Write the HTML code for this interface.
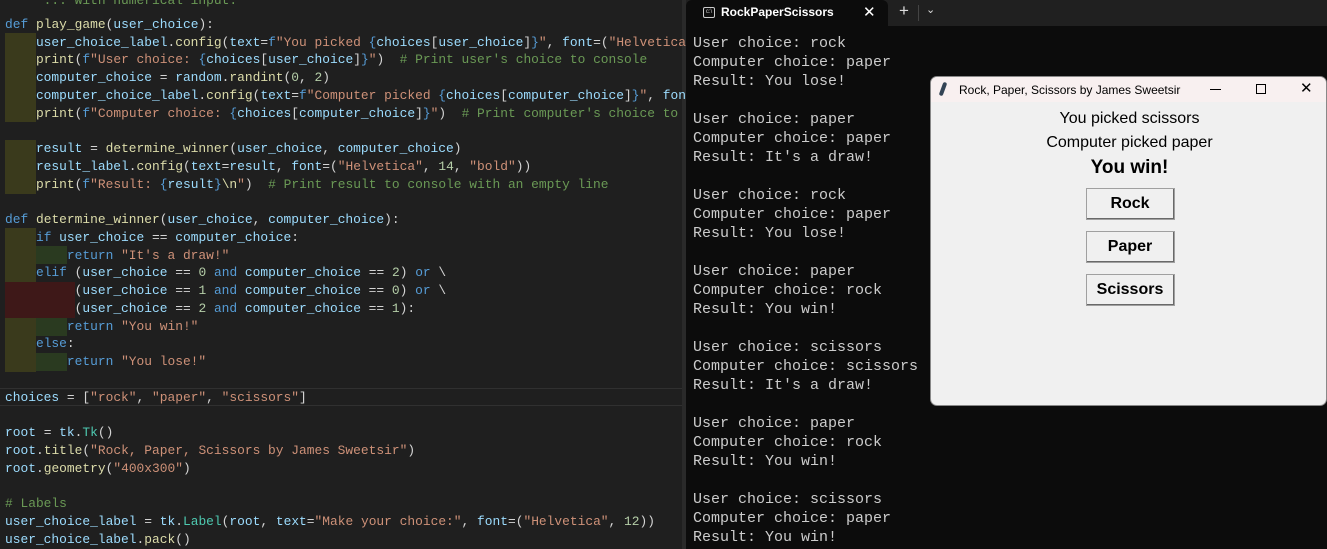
<!DOCTYPE html>
<html><head><meta charset="utf-8"><style>
*{margin:0;padding:0;box-sizing:border-box}
body{width:1327px;height:549px;overflow:hidden;background:#0c0c0c;position:relative;font-family:"Liberation Sans",sans-serif}
#ed{position:absolute;left:0;top:0;width:686px;height:549px;background:#1f1f1f;overflow:hidden}
#code{position:absolute;left:5px;top:-2px;font-family:"Liberation Mono",monospace;font-size:12.9px;line-height:17.75px;color:#9cdcfe;white-space:pre}
.k{color:#569cd6}.f{color:#dcdcaa}.s{color:#ce9178}.c{color:#6a9955}.n{color:#b5cea8}.t{color:#4ec9b0}.w{color:#d4d4d4}
.blk{position:absolute}
#term{position:absolute;left:686px;top:0;width:641px;height:549px;background:#0c0c0c}
#tabs{position:absolute;left:0;top:0;width:641px;height:26px;background:#202020}
#tab{position:absolute;left:0;top:0;width:202px;height:26px;background:#0c0c0c;border-radius:6px 6px 0 0;color:#fff;font-size:12px;font-weight:bold}
#tout{position:absolute;left:7px;top:33.5px;font-family:"Liberation Mono",monospace;font-size:15px;line-height:19px;color:#cccccc;white-space:pre}
#tk{position:absolute;left:930px;top:76px;width:397px;height:330px;background:#f0f0f0;border-radius:7px;overflow:hidden;border:1px solid #888}
#tt{height:25px;background:#f8f0f0;font-size:12px;color:#000;position:relative}
.lbl{position:absolute;left:0;width:397px;text-align:center;color:#000}
.btn{position:absolute;left:155px;width:89px;height:32px;background:#f0f0f0;border:1px solid #fff;border-right:2px solid #696969;border-bottom:2px solid #696969;outline:1px solid #a0a0a0;outline-offset:-1px;font-weight:bold;font-size:16px;text-align:center;line-height:29px}
</style></head><body>
<div id="ed">
<div class="blk" style="left:5px;top:33px;width:31px;height:89px;background:#3a3a1c"></div>
<div class="blk" style="left:5px;top:140px;width:31px;height:54px;background:#3a3a1c"></div>
<div class="blk" style="left:5px;top:228px;width:31px;height:54px;background:#3a3a1c"></div>
<div class="blk" style="left:36px;top:246px;width:31px;height:18px;background:#2a3a20"></div>
<div class="blk" style="left:5px;top:282px;width:70px;height:36px;background:#3e1818"></div>
<div class="blk" style="left:5px;top:318px;width:31px;height:54px;background:#3a3a1c"></div>
<div class="blk" style="left:36px;top:318px;width:31px;height:18px;background:#2a3a20"></div>
<div class="blk" style="left:36px;top:353px;width:31px;height:18px;background:#2a3a20"></div>
<div class="blk" style="left:0;top:388px;width:686px;height:18px;border-top:1px solid #303030;border-bottom:1px solid #303030"></div>
<div class="blk" style="left:682px;top:0;width:4px;height:549px;background:#2a2a2a"></div>
<div id="code"><span class="c" style="position:relative;top:-6px">     ... with numerical input:</span>
<span class="k">def</span> <span class="f">play_game</span><span class="w">(</span>user_choice<span class="w">):</span>
    user_choice_label<span class="w">.</span><span class="f">config</span><span class="w">(</span>text<span class="w">=</span><span class="k">f</span><span class="s">"You picked </span><span class="k">{</span>choices<span class="w">[</span>user_choice<span class="w">]</span><span class="k">}</span><span class="s">"</span><span class="w">, </span>font<span class="w">=(</span><span class="s">"Helvetica"</span>
    <span class="f">print</span><span class="w">(</span><span class="k">f</span><span class="s">"User choice: </span><span class="k">{</span>choices<span class="w">[</span>user_choice<span class="w">]</span><span class="k">}</span><span class="s">"</span><span class="w">)  </span><span class="c"># Print user's choice to console</span>
    computer_choice <span class="w">=</span> random<span class="w">.</span><span class="f">randint</span><span class="w">(</span><span class="n">0</span><span class="w">, </span><span class="n">2</span><span class="w">)</span>
    computer_choice_label<span class="w">.</span><span class="f">config</span><span class="w">(</span>text<span class="w">=</span><span class="k">f</span><span class="s">"Computer picked </span><span class="k">{</span>choices<span class="w">[</span>computer_choice<span class="w">]</span><span class="k">}</span><span class="s">"</span><span class="w">, </span>font
    <span class="f">print</span><span class="w">(</span><span class="k">f</span><span class="s">"Computer choice: </span><span class="k">{</span>choices<span class="w">[</span>computer_choice<span class="w">]</span><span class="k">}</span><span class="s">"</span><span class="w">)  </span><span class="c"># Print computer's choice to</span>

    result <span class="w">=</span> <span class="f">determine_winner</span><span class="w">(</span>user_choice<span class="w">, </span>computer_choice<span class="w">)</span>
    result_label<span class="w">.</span><span class="f">config</span><span class="w">(</span>text<span class="w">=</span>result<span class="w">, </span>font<span class="w">=(</span><span class="s">"Helvetica"</span><span class="w">, </span><span class="n">14</span><span class="w">, </span><span class="s">"bold"</span><span class="w">))</span>
    <span class="f">print</span><span class="w">(</span><span class="k">f</span><span class="s">"Result: </span><span class="k">{</span>result<span class="k">}</span><span class="f">\n</span><span class="s">"</span><span class="w">)  </span><span class="c"># Print result to console with an empty line</span>

<span class="k">def</span> <span class="f">determine_winner</span><span class="w">(</span>user_choice<span class="w">, </span>computer_choice<span class="w">):</span>
    <span class="k">if</span> user_choice <span class="w">==</span> computer_choice<span class="w">:</span>
        <span class="k">return</span> <span class="s">"It's a draw!"</span>
    <span class="k">elif</span> <span class="w">(</span>user_choice <span class="w">==</span> <span class="n">0</span> <span class="k">and</span> computer_choice <span class="w">==</span> <span class="n">2</span><span class="w">)</span> <span class="k">or</span> <span class="w">\</span>
         <span class="w">(</span>user_choice <span class="w">==</span> <span class="n">1</span> <span class="k">and</span> computer_choice <span class="w">==</span> <span class="n">0</span><span class="w">)</span> <span class="k">or</span> <span class="w">\</span>
         <span class="w">(</span>user_choice <span class="w">==</span> <span class="n">2</span> <span class="k">and</span> computer_choice <span class="w">==</span> <span class="n">1</span><span class="w">):</span>
        <span class="k">return</span> <span class="s">"You win!"</span>
    <span class="k">else</span><span class="w">:</span>
        <span class="k">return</span> <span class="s">"You lose!"</span>

choices <span class="w">= [</span><span class="s">"rock"</span><span class="w">, </span><span class="s">"paper"</span><span class="w">, </span><span class="s">"scissors"</span><span class="w">]</span>

root <span class="w">=</span> tk<span class="w">.</span><span class="t">Tk</span><span class="w">()</span>
root<span class="w">.</span><span class="f">title</span><span class="w">(</span><span class="s">"Rock, Paper, Scissors by James Sweetsir"</span><span class="w">)</span>
root<span class="w">.</span><span class="f">geometry</span><span class="w">(</span><span class="s">"400x300"</span><span class="w">)</span>

<span class="c"># Labels</span>
user_choice_label <span class="w">=</span> tk<span class="w">.</span><span class="t">Label</span><span class="w">(</span>root<span class="w">, </span>text<span class="w">=</span><span class="s">"Make your choice:"</span><span class="w">, </span>font<span class="w">=(</span><span class="s">"Helvetica"</span><span class="w">, </span><span class="n">12</span><span class="w">))</span>
user_choice_label<span class="w">.</span><span class="f">pack</span><span class="w">()</span></div>
</div>
<div id="term">
<div id="tabs">
<div id="tab">
<div style="position:absolute;left:17px;top:7px;width:12px;height:11px;border:1px solid #ccc;border-radius:2px;font-size:6px;line-height:9px;color:#ccc;text-align:center;font-weight:normal">c:\</div>
<div style="position:absolute;left:35px;top:5px">RockPaperScissors</div>
<div style="position:absolute;left:177px;top:3px;font-weight:normal;font-size:15px">✕</div>
</div>
<div style="position:absolute;left:213px;top:1px;color:#ddd;font-size:17px">+</div>
<div style="position:absolute;left:232px;top:5px;width:1px;height:16px;background:#444"></div>
<div style="position:absolute;left:240px;top:3px;color:#ddd;font-size:11px">⌄</div>
</div>
<div id="tout">User choice: rock
Computer choice: paper
Result: You lose!

User choice: paper
Computer choice: paper
Result: It's a draw!

User choice: rock
Computer choice: paper
Result: You lose!

User choice: paper
Computer choice: rock
Result: You win!

User choice: scissors
Computer choice: scissors
Result: It's a draw!

User choice: paper
Computer choice: rock
Result: You win!

User choice: scissors
Computer choice: paper
Result: You win!</div>
</div>
<div id="tk">
<div id="tt">
<div style="position:absolute;left:10px;top:5px;width:4px;height:14px;background:#345;transform:rotate(20deg);border-radius:2px"></div>
<div style="position:absolute;left:28px;top:6px">Rock, Paper, Scissors by James Sweetsir</div>
<div style="position:absolute;left:279px;top:12px;width:11px;height:1px;background:#000"></div>
<div style="position:absolute;left:325px;top:7px;width:10px;height:10px;border:1px solid #000"></div>
<div style="position:absolute;left:369px;top:2px;font-size:15px">✕</div>
</div>
<div class="lbl" style="top:33px;font-size:16px">You picked scissors</div>
<div class="lbl" style="top:57px;font-size:16px">Computer picked paper</div>
<div class="lbl" style="top:80px;font-size:19px;font-weight:bold">You win!</div>
<div class="btn" style="top:111px">Rock</div>
<div class="btn" style="top:154px">Paper</div>
<div class="btn" style="top:197px">Scissors</div>
</div>
</body></html>
